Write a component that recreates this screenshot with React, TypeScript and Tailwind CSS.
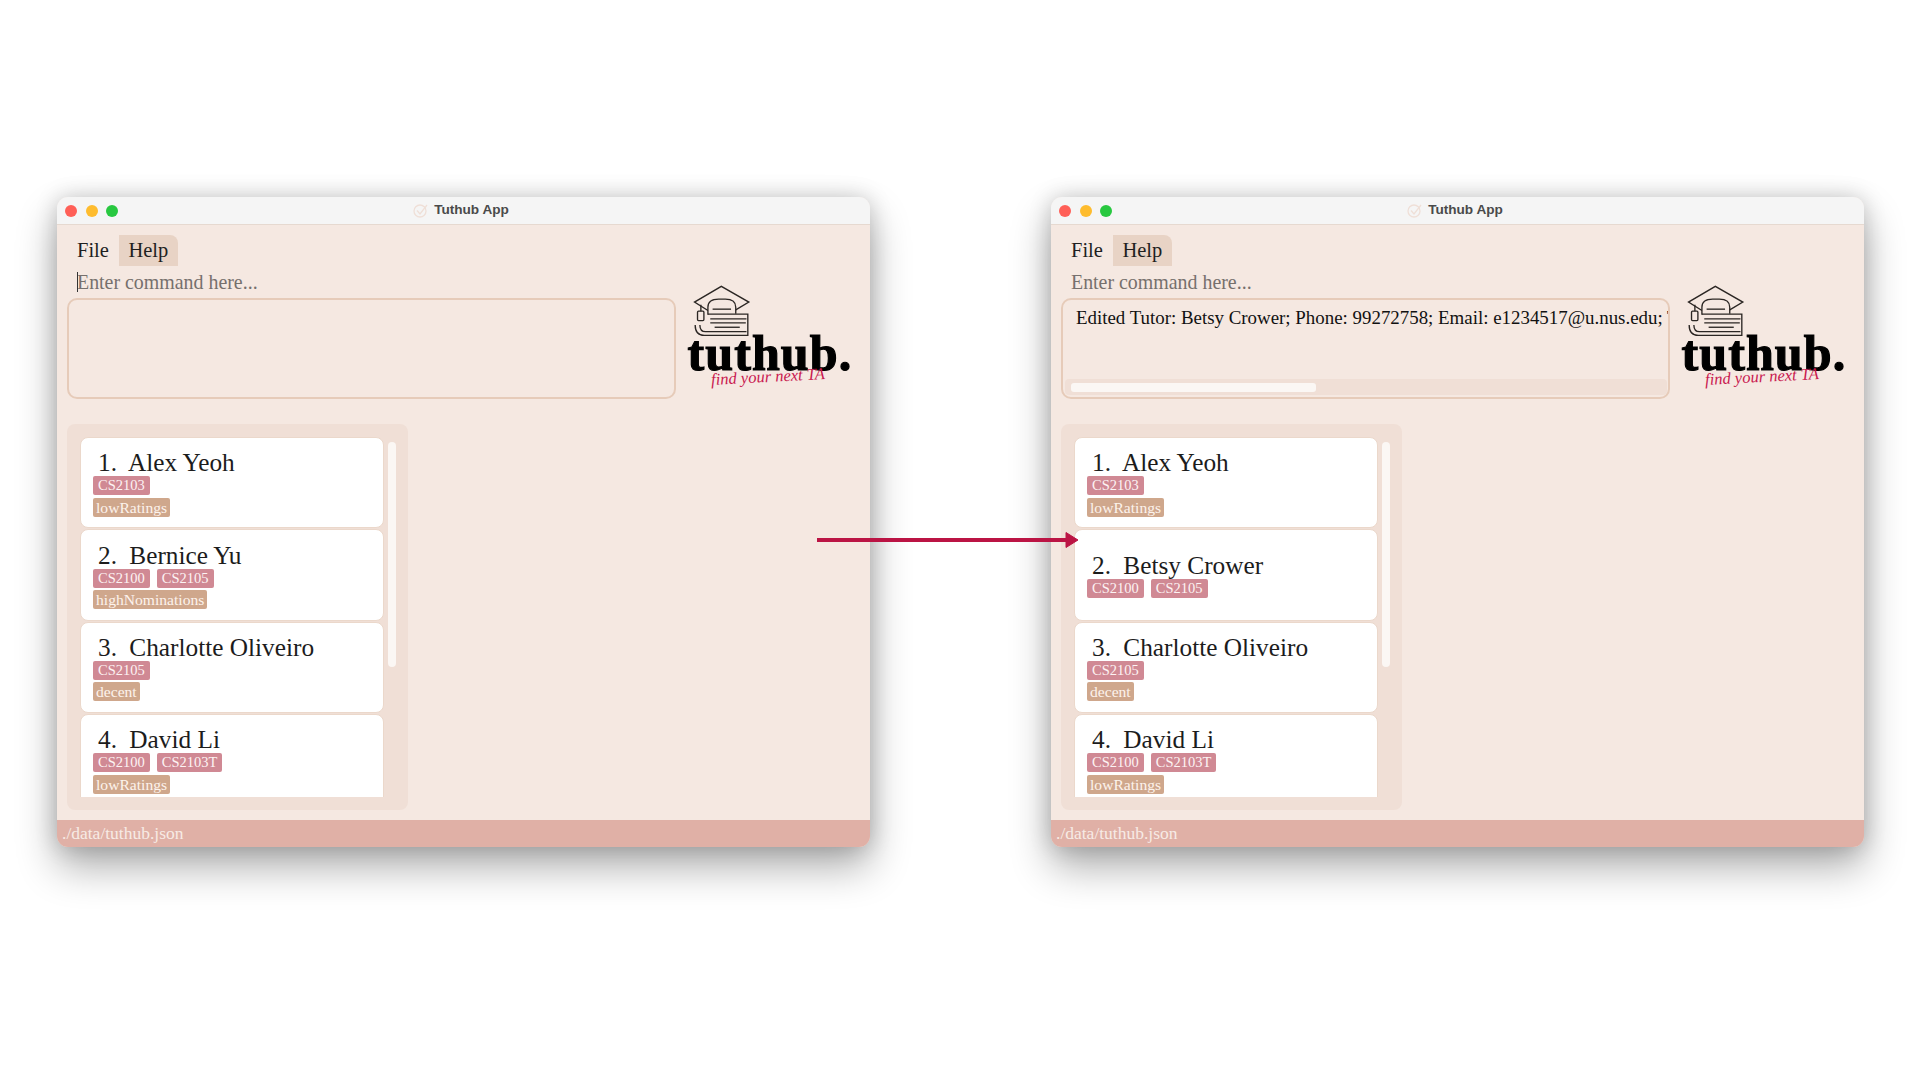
import React from "react";

type Person = { name: string; mods: string[]; rating?: string };

const base: Person[] = [
  { name: "Alex Yeoh", mods: ["CS2103"], rating: "lowRatings" },
  { name: "Bernice Yu", mods: ["CS2100", "CS2105"], rating: "highNominations" },
  { name: "Charlotte Oliveiro", mods: ["CS2105"], rating: "decent" },
  { name: "David Li", mods: ["CS2100", "CS2103T"], rating: "lowRatings" },
];

const edited: Person[] = [
  base[0],
  { name: "Betsy Crower", mods: ["CS2100", "CS2105"] },
  base[2],
  base[3],
];

function Card({ index, person }: { index: number; person: Person }) {
  return (
    <div className="flex flex-col justify-center shrink-0 h-[91.3px] rounded-[8px] bg-white border border-[#ebd8cb] pl-[12px] pt-[1px]">
      <div className="ml-[5px] h-[27px] leading-[27px] text-[25.3px] text-[#1c1c1c] whitespace-pre">
        <span className="mr-[6px]">{index}.</span> {person.name}
      </div>
      <div className="flex gap-[7px]">
        {person.mods.map((m) => (
          <span key={m} className="h-[19px] leading-[19px] px-[5px] rounded-[2px] bg-[#d08994] text-[14.5px] text-[#fdf3f3]">
            {m}
          </span>
        ))}
      </div>
      {person.rating && (
        <div className="flex mt-[2.5px]">
          <span className="h-[19px] leading-[19px] px-[3px] rounded-[2px] bg-[#cfa78c] text-[15.6px] text-[#fdf3ec]">
            {person.rating}
          </span>
        </div>
      )}
    </div>
  );
}

function Logo() {
  return (
    <div className="relative ml-[10px] -mt-[15px] w-[170px] h-[112px] flex flex-col">
      <svg width="64" height="57" viewBox="90 40 190 170" fill="none" stroke="#2b2623" strokeWidth="4" className="ml-[4px] shrink-0">
        <path d="M143 122 L103 97 L183 50 L265 97 L226 120" />
        <path d="M143 135 V112 Q143 88 175 88 H195 Q226 88 226 112 V132" />
        <path d="M157 118 H212" />
        <path d="M122 105 V124" />
        <rect x="112" y="124" width="19" height="28" rx="3" />
        <path d="M143 133 H262 V196 H132 Q105 196 105 165" />
        <path d="M119 165 Q119 185 136 185 H258" />
        <path d="M150 147 H258" />
        <path d="M163 172 H238" />
        <path d="M150 159 H256" />
      </svg>
      <div className="-mt-[13px] ml-[1.5px] h-[52px] leading-[52px] text-[50px] tracking-[1.1px] font-bold text-black font-['Liberation_Serif',serif] [-webkit-text-stroke:1.2px_#000]">
        tuthub.
      </div>
      <div className="absolute left-[25px] top-[83px] text-[16.5px] leading-[22px] italic whitespace-nowrap text-[#c9184f] font-['Liberation_Serif',serif] -rotate-3">
        find your next TA
      </div>
    </div>
  );
}

function AppWindow({ people, message, caret }: { people: Person[]; message?: string; caret?: boolean }) {
  return (
    <div className="flex flex-col w-[813px] h-[650px] shrink-0 rounded-[11px] overflow-hidden bg-[#f5e8e1] shadow-[0_20px_40px_rgba(0,0,0,0.32),0_0_22px_rgba(0,0,0,0.18)] font-['Liberation_Serif',serif]">
      <div className="relative flex items-center justify-center h-[28px] shrink-0 bg-[#f5f5f5] border-b border-[#e6d9d0]">
        <div className="absolute left-[8px] top-[8px] flex gap-[8.5px]">
          <span className="w-[12px] h-[12px] rounded-full bg-[#ff5f57]" />
          <span className="w-[12px] h-[12px] rounded-full bg-[#febc2e]" />
          <span className="w-[12px] h-[12px] rounded-full bg-[#28c840]" />
        </div>
        <div className="flex items-center gap-[6px] -ml-[5px]">
          <svg width="15" height="15" viewBox="0 0 15 15" fill="none" stroke="#efdfd7" strokeWidth="1.3">
            <circle cx="7" cy="8" r="6" />
            <path d="M4 7.5 L7 11 L14 2" />
          </svg>
          <span className="text-[13.6px] font-bold text-[#4a4a4a] font-['Liberation_Sans',sans-serif]">Tuthub App</span>
        </div>
      </div>

      <div className="flex flex-col flex-1 min-h-0 pt-[10px]">
        <div className="flex h-[31px] shrink-0 ml-[10px] text-[20.5px] leading-[31px] text-[#1f1f1f]">
          <span className="px-[10px]">File</span>
          <span className="px-[9.5px] bg-[#e8d3c5] rounded-tr-[8px]">Help</span>
        </div>

        <div className="relative h-[32px] shrink-0 pl-[20px] text-[19.9px] leading-[32px] text-[#76706d]">
          {caret && <span className="absolute left-[20px] top-[6px] w-px h-[20px] bg-[#333]" />}
          Enter command here...
        </div>

        <div className="flex shrink-0 h-[101px]">
          <div className="ml-[10px] w-[609px] h-[101px] flex flex-col border-[2.5px] border-[#e6cbb9] rounded-[10px] overflow-hidden">
            <div className="flex-1 min-h-0 overflow-hidden pl-[13px] pt-[5px] h-[26px] leading-[26px] text-[18.9px] text-[#111] whitespace-nowrap">
              {message}
            </div>
            {message && (
              <div className="h-[16px] mb-[2px] mx-[1.5px] shrink-0 rounded-[4px] bg-[#f0dfd6] flex items-center pl-[6px]">
                <div className="w-[245px] h-[9px] rounded-[3px] bg-[#fbf7f4]" />
              </div>
            )}
          </div>
          <Logo />
        </div>

        <div className="mt-[25px] ml-[10px] w-[341px] h-[386px] shrink-0 flex rounded-[8px] bg-[#f0dfd6] pt-[13px] pl-[13px]">
          <div className="w-[304px] h-[360px] flex flex-col gap-[1px] overflow-hidden">
            {people.map((p, i) => (
              <Card key={p.name} index={i + 1} person={p} />
            ))}
          </div>
          <div className="ml-[4px] mt-[5px] w-[8px] h-[225px] rounded-[4px] bg-[#fbf7f4]" />
        </div>

        <div className="mt-[10px] flex-1 bg-[#e0b0a6] pl-[5px] text-[17.5px] leading-[27px] text-[#f7ebe5]">
          ./data/tuthub.json
        </div>
      </div>
    </div>
  );
}

export default function App() {
  return (
    <div className="relative w-[1920px] h-[1080px] overflow-hidden bg-white">
      <div className="flex gap-[181px] pt-[197px] pl-[57px]">
        <AppWindow people={base} caret />
        <AppWindow
          people={edited}
          message="Edited Tutor: Betsy Crower; Phone: 99272758; Email: e1234517@u.nus.edu; Tags: [CS2100][CS2105]"
        />
      </div>
      <svg className="absolute left-[816px] top-[530px]" width="264" height="20" viewBox="0 0 264 20">
        <rect x="1" y="8" width="252" height="4" fill="#bb1444" />
        <path d="M250 2.5 L262 10 L250 17.5 Z" fill="#bb1444" stroke="#bb1444" strokeLinejoin="round" />
      </svg>
    </div>
  );
}
